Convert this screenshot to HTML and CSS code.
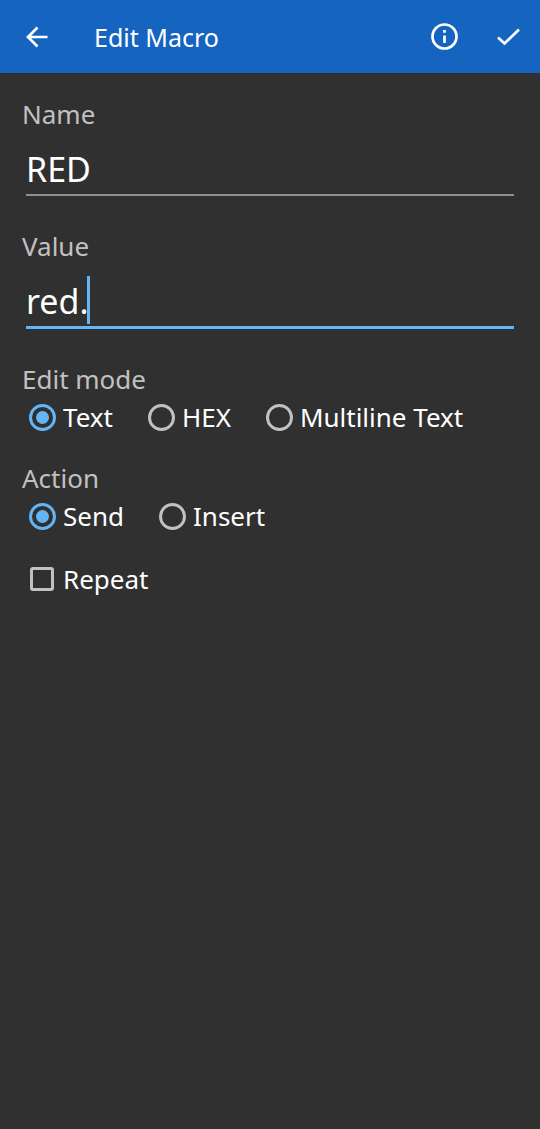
FILE: index.html
```html
<!DOCTYPE html>
<html lang="en">
<head>
<meta charset="utf-8">
<meta name="viewport" content="width=device-width, initial-scale=1">
<title>Edit Macro</title>
<link rel="stylesheet" href="styles.css">
</head>
<body>
<header class="app-bar">
  <button class="icon-button" type="button" aria-label="Back">
    <svg class="icon" viewBox="0 0 32 32" aria-hidden="true"><path d="M26.500 16H7M16.500 6.500L7 16L16.500 25.500"/></svg>
  </button>
  <h1 class="app-title">Edit Macro</h1>
  <button class="icon-button" type="button" aria-label="Info">
    <svg class="icon" viewBox="0 0 32 32" aria-hidden="true"><circle cx="16.500" cy="15.500" r="12"/><path d="M16.500 14.500V22M16.500 9V11.700"/></svg>
  </button>
  <button class="icon-button" type="button" aria-label="Save">
    <svg class="icon" viewBox="0 0 32 32" aria-hidden="true"><path d="M6 16.500L12.500 22.500L27 8.500"/></svg>
  </button>
</header>
<main>
  <form class="form">
    <div class="group">
      <label class="caption" for="name">Name</label>
      <label class="field"><input class="field-input" id="name" type="text" value="RED" size="3"></label>
    </div>
    <div class="group">
      <label class="caption" for="value">Value</label>
      <label class="field field-active"><input class="field-input" id="value" type="text" value="red." size="3"><span class="caret"></span></label>
    </div>
    <fieldset class="choices">
      <legend class="caption">Edit mode</legend>
      <div class="row">
        <label class="choice"><input class="radio" type="radio" name="mode" checked>Text</label>
        <label class="choice"><input class="radio" type="radio" name="mode">HEX</label>
        <label class="choice"><input class="radio" type="radio" name="mode">Multiline Text</label>
      </div>
    </fieldset>
    <fieldset class="choices">
      <legend class="caption">Action</legend>
      <div class="row">
        <label class="choice"><input class="radio" type="radio" name="action" checked>Send</label>
        <label class="choice"><input class="radio" type="radio" name="action">Insert</label>
      </div>
    </fieldset>
    <div class="row">
      <label class="choice"><input class="checkbox" type="checkbox">Repeat</label>
    </div>
  </form>
</main>
</body>
</html>
```
FILE: styles.css
```css
* {
  box-sizing: border-box;
}

body {
  margin: 0;
  min-height: 100vh;
  background: #303030;
  color: #fff;
  font: 26px/36px "Noto Sans", "Open Sans", sans-serif;
}

.app-bar {
  display: flex;
  align-items: center;
  height: 73px;
  padding-left: 5px;
  background: #1565c0;
}

.icon-button {
  display: flex;
  align-items: center;
  justify-content: center;
  width: 64px;
  height: 64px;
  padding: 0;
  border: 0;
  background: none;
  color: #fff;
}

.icon {
  width: 32px;
  height: 32px;
  fill: none;
  stroke: currentColor;
  stroke-width: 2.7;
}

.app-title {
  flex: 1;
  margin: 0;
  padding-left: 25px;
  font-size: 25px;
  font-weight: 400;
}

.form {
  padding: 23px 22px;
}

.group {
  margin-bottom: 32px;
}

.caption {
  display: block;
  padding: 0;
  color: #c1c1c1;
}

.field {
  display: flex;
  align-items: flex-start;
  height: 52px;
  margin: 12px 4px 0;
  border-bottom: 2px solid #8f8f8f;
}

.field-active {
  height: 53px;
  border-bottom: 3px solid #64b5f6;
}

.field-input {
  field-sizing: content;
  height: 48px;
  padding: 2px 0 0;
  border: 0;
  outline: 0;
  background: none;
  color: #fff;
  font: inherit;
  font-size: 34px;
}

.caret {
  width: 3px;
  height: 48px;
  margin-left: -2px;
  background: #64b5f6;
}

.choices {
  min-width: 0;
  margin: 0 0 23px;
  padding: 0;
  border: 0;
}

.row {
  display: flex;
  flex-wrap: wrap;
  column-gap: 35px;
  padding-left: 7px;
}

.choice {
  display: flex;
  align-items: center;
  gap: 7px;
  height: 40px;
}

.radio,
.checkbox {
  appearance: none;
  flex: none;
  margin: 0;
  border: 3px solid #c1c1c1;
}

.radio {
  display: grid;
  place-items: center;
  width: 27px;
  height: 27px;
  border-radius: 50%;
}

.radio:checked {
  border-color: #64b5f6;
}

.radio:checked::before {
  content: "";
  width: 13px;
  height: 13px;
  border-radius: 50%;
  background: #64b5f6;
}

.checkbox {
  width: 24px;
  height: 24px;
  margin: 0 2px 0 1px;
  border-radius: 3px;
}

.checkbox:checked {
  border-color: #64b5f6;
  background: #64b5f6;
}
```
